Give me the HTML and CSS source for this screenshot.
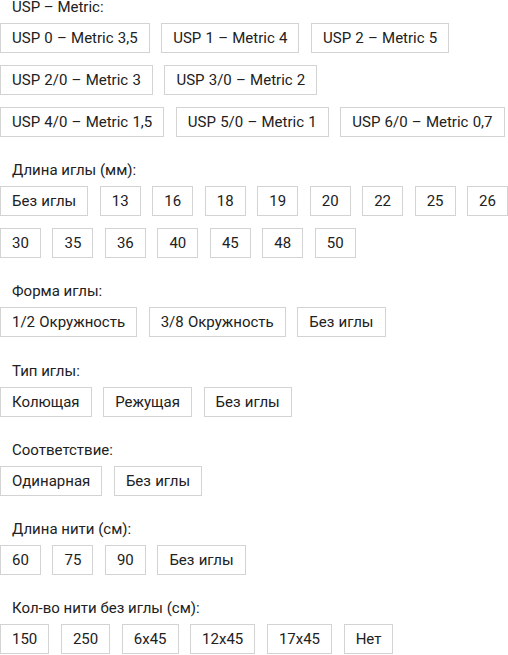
FILE: index.html
```html
<!DOCTYPE html>
<html lang="ru">
  <head>
    <meta charset="UTF-8" />
    <meta name="viewport" content="width=device-width, initial-scale=1.0" />
    <title>Фильтры</title>
    <link rel="stylesheet" href="styles.css">
  </head>
  <body>
    <div class="filters">
      <div class="filter-group">
        <div class="filter-title">USP – Metric:</div>
        <div class="options">
          <span class="option">USP 0 – Metric 3,5</span>
          <span class="option">USP 1 – Metric 4</span>
          <span class="option">USP 2 – Metric 5</span>
        </div>
        <div class="options">
          <span class="option">USP 2/0 – Metric 3</span>
          <span class="option">USP 3/0 – Metric 2</span>
        </div>
        <div class="options">
          <span class="option">USP 4/0 – Metric 1,5</span>
          <span class="option">USP 5/0 – Metric 1</span>
          <span class="option">USP 6/0 – Metric 0,7</span>
        </div>
      </div>

      <div class="filter-group">
        <div class="filter-title">Длина иглы (мм):</div>
        <div class="options">
          <span class="option">Без иглы</span>
          <span class="option">13</span>
          <span class="option">16</span>
          <span class="option">18</span>
          <span class="option">19</span>
          <span class="option">20</span>
          <span class="option">22</span>
          <span class="option">25</span>
          <span class="option">26</span>
        </div>
        <div class="options">
          <span class="option">30</span>
          <span class="option">35</span>
          <span class="option">36</span>
          <span class="option">40</span>
          <span class="option">45</span>
          <span class="option">48</span>
          <span class="option">50</span>
        </div>
      </div>

      <div class="filter-group">
        <div class="filter-title">Форма иглы:</div>
        <div class="options">
          <span class="option">1/2 Окружность</span>
          <span class="option">3/8 Окружность</span>
          <span class="option">Без иглы</span>
        </div>
      </div>

      <div class="filter-group">
        <div class="filter-title">Тип иглы:</div>
        <div class="options">
          <span class="option">Колющая</span>
          <span class="option">Режущая</span>
          <span class="option">Без иглы</span>
        </div>
      </div>

      <div class="filter-group">
        <div class="filter-title">Соответствие:</div>
        <div class="options">
          <span class="option">Одинарная</span>
          <span class="option">Без иглы</span>
        </div>
      </div>

      <div class="filter-group">
        <div class="filter-title">Длина нити (см):</div>
        <div class="options">
          <span class="option">60</span>
          <span class="option">75</span>
          <span class="option">90</span>
          <span class="option">Без иглы</span>
        </div>
      </div>

      <div class="filter-group">
        <div class="filter-title">Кол-во нити без иглы (см):</div>
        <div class="options">
          <span class="option">150</span>
          <span class="option">250</span>
          <span class="option">6x45</span>
          <span class="option">12x45</span>
          <span class="option">17x45</span>
          <span class="option">Нет</span>
        </div>
      </div>
    </div>
  </body>
</html>
```

FILE: styles.css
```css
body {
  margin: 0;
  font-family: Roboto, "Liberation Sans", sans-serif;
  font-size: 15px;
  color: #212121;
  background: #fff;
}

.filters {
  margin-top: -2px;
}

.filter-group {
  margin-bottom: 24.2px;
}

.filter-title {
  padding-left: 12px;
  line-height: 18px;
  margin-bottom: 7px;
}

/* one line of option buttons */
.options {
  display: flex;
  gap: 11.6px;
}

.options + .options {
  margin-top: 12px;
}

.option {
  flex-shrink: 0;
  box-sizing: border-box;
  height: 30px;
  line-height: 28px;
  padding: 0 11px;
  border: 1px solid #d3d3d3;
  word-spacing: 0.5px;
  white-space: nowrap;
  cursor: pointer;
}
```
